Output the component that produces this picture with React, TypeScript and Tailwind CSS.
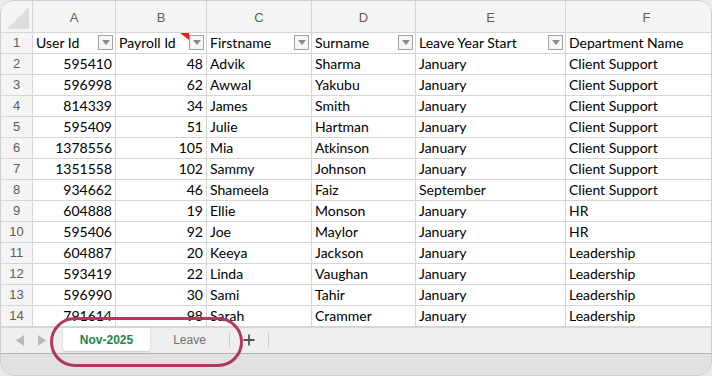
import React from 'react';

const columns = ['A', 'B', 'C', 'D', 'E', 'F'];

const headers = ['User Id', 'Payroll Id', 'Firstname', 'Surname', 'Leave Year Start', 'Department Name'];

const rows: [string, string, string, string, string, string][] = [
  ['595410', '48', 'Advik', 'Sharma', 'January', 'Client Support'],
  ['596998', '62', 'Awwal', 'Yakubu', 'January', 'Client Support'],
  ['814339', '34', 'James', 'Smith', 'January', 'Client Support'],
  ['595409', '51', 'Julie', 'Hartman', 'January', 'Client Support'],
  ['1378556', '105', 'Mia', 'Atkinson', 'January', 'Client Support'],
  ['1351558', '102', 'Sammy', 'Johnson', 'January', 'Client Support'],
  ['934662', '46', 'Shameela', 'Faiz', 'September', 'Client Support'],
  ['604888', '19', 'Ellie', 'Monson', 'January', 'HR'],
  ['595406', '92', 'Joe', 'Maylor', 'January', 'HR'],
  ['604887', '20', 'Keeya', 'Jackson', 'January', 'Leadership'],
  ['593419', '22', 'Linda', 'Vaughan', 'January', 'Leadership'],
  ['596990', '30', 'Sami', 'Tahir', 'January', 'Leadership'],
  ['791614', '98', 'Sarah', 'Crammer', 'January', 'Leadership'],
];

const cellFont = { fontFamily: 'Lato, "Open Sans", sans-serif' };
const uiFont = { fontFamily: '"Liberation Sans", Arial, sans-serif' };

const FilterButton = () => (
  <div className="absolute right-[2px] top-[2px] flex h-[15px] w-[15px] items-center justify-center border border-[#a3a3a3] bg-[#f6f6f6]">
    <svg width="8" height="5" viewBox="0 0 8 5">
      <path d="M0 0 L8 0 L4 5 Z" fill="#8a8a8a" />
    </svg>
  </div>
);

export default function App() {
  return (
    <div className="h-[376px] w-[712px] bg-[#eaeaea]">
      <div className="relative flex h-[376px] w-[712px] flex-col overflow-hidden rounded-[14px] border border-[#cfcfcf] bg-[#e1e1e1]">
        {/* sheet grid */}
        <div
          className="grid h-[326px] shrink-0 grid-cols-[32px_83px_91px_105px_104px_150px_162px] grid-rows-[32px_repeat(14,21px)] overflow-hidden bg-white"
          style={cellFont}
        >
          {/* corner */}
          <div className="relative border-r border-b border-[#d6d6d6] bg-[#f5f5f5]">
            <svg className="absolute left-[6px] top-[6px]" width="22" height="22" viewBox="0 0 22 22">
              <path d="M22 0 L22 22 L0 22 Z" fill="#dcdcdc" />
            </svg>
          </div>
          {columns.map((c) => (
            <div
              key={c}
              className="flex items-center justify-center border-r border-b border-[#d6d6d6] bg-[#f5f5f5] pt-[2px] text-[13px] text-[#5c5c5c]"
              style={uiFont}
            >
              {c}
            </div>
          ))}

          {/* row 1: headers */}
          <div
            className="flex items-center justify-center border-r border-b border-[#d6d6d6] bg-[#f5f5f5] text-[13px] text-[#5c5c5c]"
            style={uiFont}
          >
            1
          </div>
          {headers.map((h, i) => (
            <div
              key={h}
              className="relative overflow-hidden whitespace-nowrap border-r border-b border-[#d6d6d6] px-[3px] text-[14px] leading-[20px] text-black"
            >
              {h}
              {i === 1 && (
                <svg className="absolute right-[17px] top-0" width="9" height="7" viewBox="0 0 9 7">
                  <path d="M0 0 L9 0 L9 7 Z" fill="#ee1c1c" />
                </svg>
              )}
              {i < 5 && <FilterButton />}
            </div>
          ))}

          {rows.map((r, ri) => (
            <React.Fragment key={ri}>
              <div
                className="flex items-center justify-center border-r border-b border-[#d6d6d6] bg-[#f5f5f5] text-[13px] text-[#5c5c5c]"
                style={uiFont}
              >
                {ri + 2}
              </div>
              {r.map((v, ci) => (
                <div
                  key={ci}
                  className={`overflow-hidden whitespace-nowrap border-r border-b border-[#d6d6d6] px-[3px] text-[14px] leading-[20px] text-black ${
                    ci < 2 ? 'text-right' : 'text-left'
                  }`}
                >
                  {v}
                </div>
              ))}
            </React.Fragment>
          ))}
        </div>

        {/* sheet tabs */}
        <div className="flex h-[26px] shrink-0 items-start border-t border-[#d6d6d6] bg-[#efefef]" style={uiFont}>
          <div className="flex h-[24px] w-[62px] items-center gap-[14px] pl-[15px]">
            <svg width="8" height="11" viewBox="0 0 8 11">
              <path d="M8 0 L8 11 L0 5.5 Z" fill="#b9b9b9" />
            </svg>
            <svg width="8" height="11" viewBox="0 0 8 11">
              <path d="M0 0 L0 11 L8 5.5 Z" fill="#b9b9b9" />
            </svg>
          </div>
          <div className="flex h-[23px] w-[87px] items-center justify-center rounded-b-[3px] bg-white text-[12px] font-bold text-[#23864a] shadow-[0_1px_2px_rgba(0,0,0,0.18)]">
            Nov-2025
          </div>
          <div className="flex h-[23px] w-[79px] items-center justify-center text-[12px] text-[#6f6f6f]">Leave</div>
          <div className="mt-[4px] h-[16px] w-px bg-[#cbcbcb]" />
          <div className="flex h-[23px] w-[38px] items-center justify-center">
            <svg width="12" height="12" viewBox="0 0 12 12">
              <path d="M6 0.5 V11.5 M0.5 6 H11.5" stroke="#555" strokeWidth="1.8" />
            </svg>
          </div>
          <div className="mt-[4px] h-[16px] w-px bg-[#cbcbcb]" />
        </div>

        {/* status area */}
        <div className="flex-1 border-t border-[#b3b3b3] bg-[#e1e1e1]" />

        {/* highlight around the sheet tabs */}
        <div className="pointer-events-none absolute left-[49px] top-[316px] h-[50px] w-[193px] rounded-[25px] border-[3px] border-[#b0375f]" />
      </div>
    </div>
  );
}
